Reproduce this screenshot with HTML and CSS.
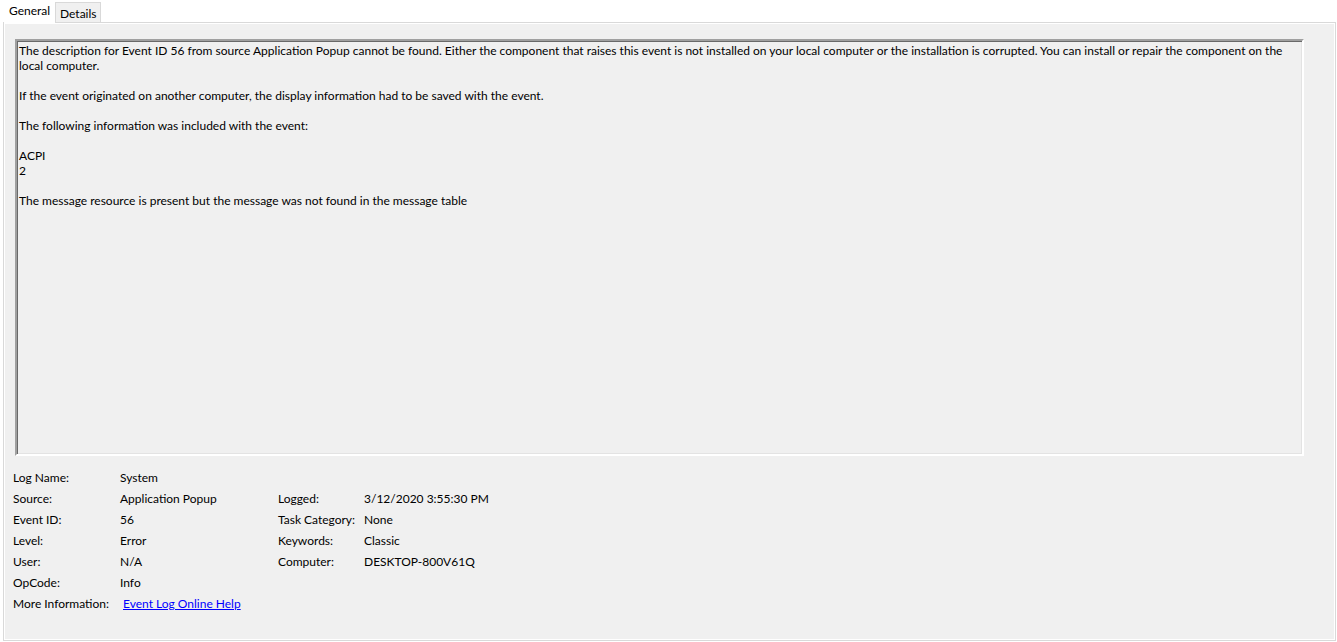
FILE: index.html
```html
<!DOCTYPE html>
<html>
<head>
<meta charset="utf-8">
<link rel="stylesheet" href="styles.css">
</head>
<body>
<div class="tabs">
  <div class="tab active">General</div>
  <div class="tab">Details</div>
</div>
<div class="panel">
  <div class="desc">
    <p>The description for Event ID 56 from source Application Popup cannot be found. Either the component that raises this event is not installed on your local computer or the installation is corrupted. You can install or repair the component on the<br>local computer.</p>
    <p>If the event originated on another computer, the display information had to be saved with the event.</p>
    <p>The following information was included with the event:</p>
    <p>ACPI<br>2</p>
    <p>The message resource is present but the message was not found in the message table</p>
  </div>
  <div class="props">
    <div class="lbl">Log Name:</div><div class="val">System</div><div></div><div></div>
    <div class="lbl">Source:</div><div class="val">Application Popup</div><div class="lbl">Logged:</div><div class="val">3/12/2020 3:55:30 PM</div>
    <div class="lbl">Event ID:</div><div class="val">56</div><div class="lbl">Task Category:</div><div class="val">None</div>
    <div class="lbl">Level:</div><div class="val">Error</div><div class="lbl">Keywords:</div><div class="val">Classic</div>
    <div class="lbl">User:</div><div class="val">N/A</div><div class="lbl">Computer:</div><div class="val">DESKTOP-800V61Q</div>
    <div class="lbl">OpCode:</div><div class="val">Info</div><div></div><div></div>
    <div class="lbl">More Information:</div><div class="val"><a class="link" href="#">Event Log Online Help</a></div><div></div><div></div>
  </div>
</div>
</body>
</html>
```
FILE: styles.css
```css
html, body {
  margin: 0;
  padding: 0;
  background: #ffffff;
}
body {
  font-family: "Lato", "Noto Sans", sans-serif;
  font-size: 12px;
  color: #000000;
  width: 1337px;
  height: 642px;
  overflow: hidden;
}
.tabs {
  display: flex;
  align-items: flex-end;
  height: 22px;
  margin-left: 4px;
  position: relative;
  z-index: 1;
}
.tab {
  box-sizing: border-box;
  height: 20px;
  padding: 0 3px 0 4px;
  border: 1px solid #d9d9d9;
  border-bottom: none;
  background: #f0f0f0;
  line-height: 19px;
  padding-top: 1px;
}
.tab.active {
  height: 23px;
  width: 51px;
  margin-bottom: -1px;
  padding: 0 0 0 5px;
  border: none;
  background: #ffffff;
  line-height: 21px;
}
.panel {
  box-sizing: border-box;
  margin-left: 3px;
  width: 1333px;
  height: 619px;
  border: 1px solid #d9d9d9;
  box-shadow: inset 1px 1px 0 #ffffff, inset -1px -1px 0 #ffffff;
  background: #f0f0f0;
  padding: 16px 31px 0 11px;
}
.desc {
  box-sizing: border-box;
  height: 417px;
  border-style: solid;
  border-width: 2px;
  border-color: #a0a0a0 #ffffff #ffffff #a0a0a0;
  box-shadow: inset 1px 1px 0 #696969, inset -1px -1px 0 #e3e3e3;
  padding: 2px 1px 0 2px;
  line-height: 15px;
  white-space: nowrap;
  overflow: hidden;
}
.desc p {
  margin: 0 0 15px 0;
}
.props {
  display: grid;
  grid-template-columns: 107px 158px 86px 1fr;
  grid-auto-rows: 21px;
  line-height: 21px;
  margin-top: 11px;
  margin-left: -2px;
}
.link {
  color: #0000ff;
  text-decoration: underline;
  padding-left: 3px;
}
```
